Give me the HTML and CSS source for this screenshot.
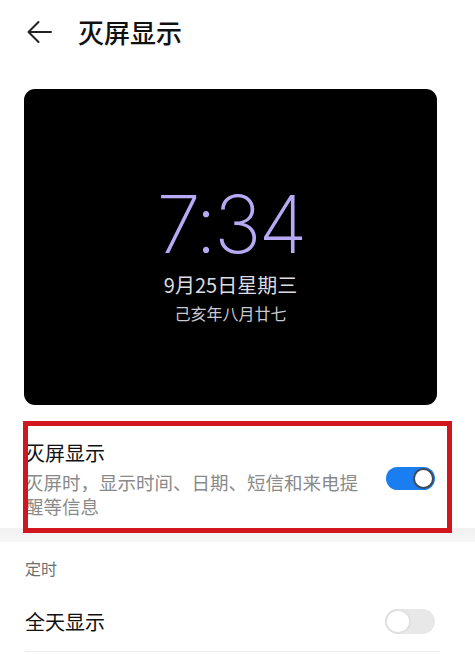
FILE: index.html
```html
<!DOCTYPE html>
<html lang="zh-CN">
<head>
<meta charset="utf-8">
<title>灭屏显示</title>
<link rel="stylesheet" href="styles.css">
</head>
<body>
<div class="page">
  <header class="header">
    <svg class="back" width="26" height="24" viewBox="0 0 26 24">
      <path d="M25 12H2.5M12.5 2L2.5 12l10 10" fill="none" stroke="#222" stroke-width="2" stroke-linecap="round" stroke-linejoin="round"/>
    </svg>
    <h1 class="title">灭屏显示</h1>
  </header>

  <div class="preview">
    <div class="clock">7:34</div>
    <div class="date">9月25日星期三</div>
    <div class="lunar">己亥年八月廿七</div>
  </div>

  <div class="row row-main">
    <div class="row-text">
      <div class="row-title">灭屏显示</div>
      <div class="row-sub">灭屏时，显示时间、日期、短信和来电提醒等信息</div>
    </div>
    <div class="switch on"><span class="knob"></span></div>
    <div class="highlight"></div>
  </div>

  <div class="band"></div>

  <div class="section-label">定时</div>

  <div class="row row-plain">
    <div class="row-title">全天显示</div>
    <div class="switch off"><span class="knob"></span></div>
  </div>
</div>
</body>
</html>
```
FILE: styles.css
```css
* { box-sizing: border-box; }
html, body { margin: 0; padding: 0; background: #fff; }
body {
  font-family: "Noto Sans CJK SC", "Noto Sans", sans-serif;
  color: #111;
  width: 475px;
  height: 655px;
  overflow: hidden;
}
.page { position: relative; }

.header {
  height: 64px;
  display: flex;
  align-items: center;
  padding-left: 26px;
}
.back { display: block; }
.title {
  margin: 0 0 0 26px;
  font-size: 26px;
  font-weight: 500;
  line-height: 1;
  color: #111;
}

.preview {
  margin: 25px 38px 0 24px;
  height: 316px;
  background: #000;
  border-radius: 11px;
  display: flex;
  flex-direction: column;
  align-items: center;
  padding-top: 95px;
}
.clock {
  font-family: Inter, "Noto Sans", sans-serif;
  font-weight: 200;
  font-size: 80px;
  line-height: 80px;
  color: #b7a9f4;
  letter-spacing: -3px;
}
.date {
  margin-top: 11px;
  font-size: 20px;
  line-height: 1;
  color: #dcdce4;
}
.lunar {
  margin-top: 10px;
  font-size: 16px;
  line-height: 1;
  color: #c9c9d2;
}

.row {
  position: relative;
  display: flex;
  align-items: center;
}
.row-main {
  padding: 38px 40px 10px 25px;
  justify-content: space-between;
}
.row-text { width: 345px; }
.row-title {
  font-size: 20px;
  line-height: 1;
  color: #111;
}
.row-sub {
  margin-top: 7px;
  font-size: 18.5px;
  line-height: 24px;
  color: #8a8a8a;
}
.highlight {
  position: absolute;
  left: 23px;
  top: 16px;
  width: 429px;
  height: 112px;
  border: 5px solid #d2161d;
}

.switch {
  position: relative;
  flex: none;
  border-radius: 13px;
}
.switch.on {
  width: 49px;
  height: 23px;
  background: #1a7ef0;
  margin-top: -5px;
}
.switch.on .knob {
  position: absolute;
  right: 1px;
  top: 1px;
  width: 21px;
  height: 21px;
  border-radius: 50%;
  background: #fff;
  border: 2px solid #3d4a57;
}
.switch.off {
  width: 50px;
  height: 25px;
  background: #e8e8e8;
}
.switch.off .knob {
  position: absolute;
  left: 0;
  top: 0;
  width: 26px;
  height: 25px;
  border-radius: 50%;
  background: #fff;
  border: 2px solid #e0e0e0;
}

.band {
  height: 14px;
  background: linear-gradient(#f0f0f0, #f7f7f7);
}

.section-label {
  padding: 18px 0 0 25px;
  font-size: 16px;
  line-height: 1;
  color: #6f6f6f;
}

.row-plain {
  margin: 0 35px 0 25px;
  padding: 33px 5px 17px 0;
  justify-content: space-between;
  border-bottom: 1px solid #eeeeee;
}
```
